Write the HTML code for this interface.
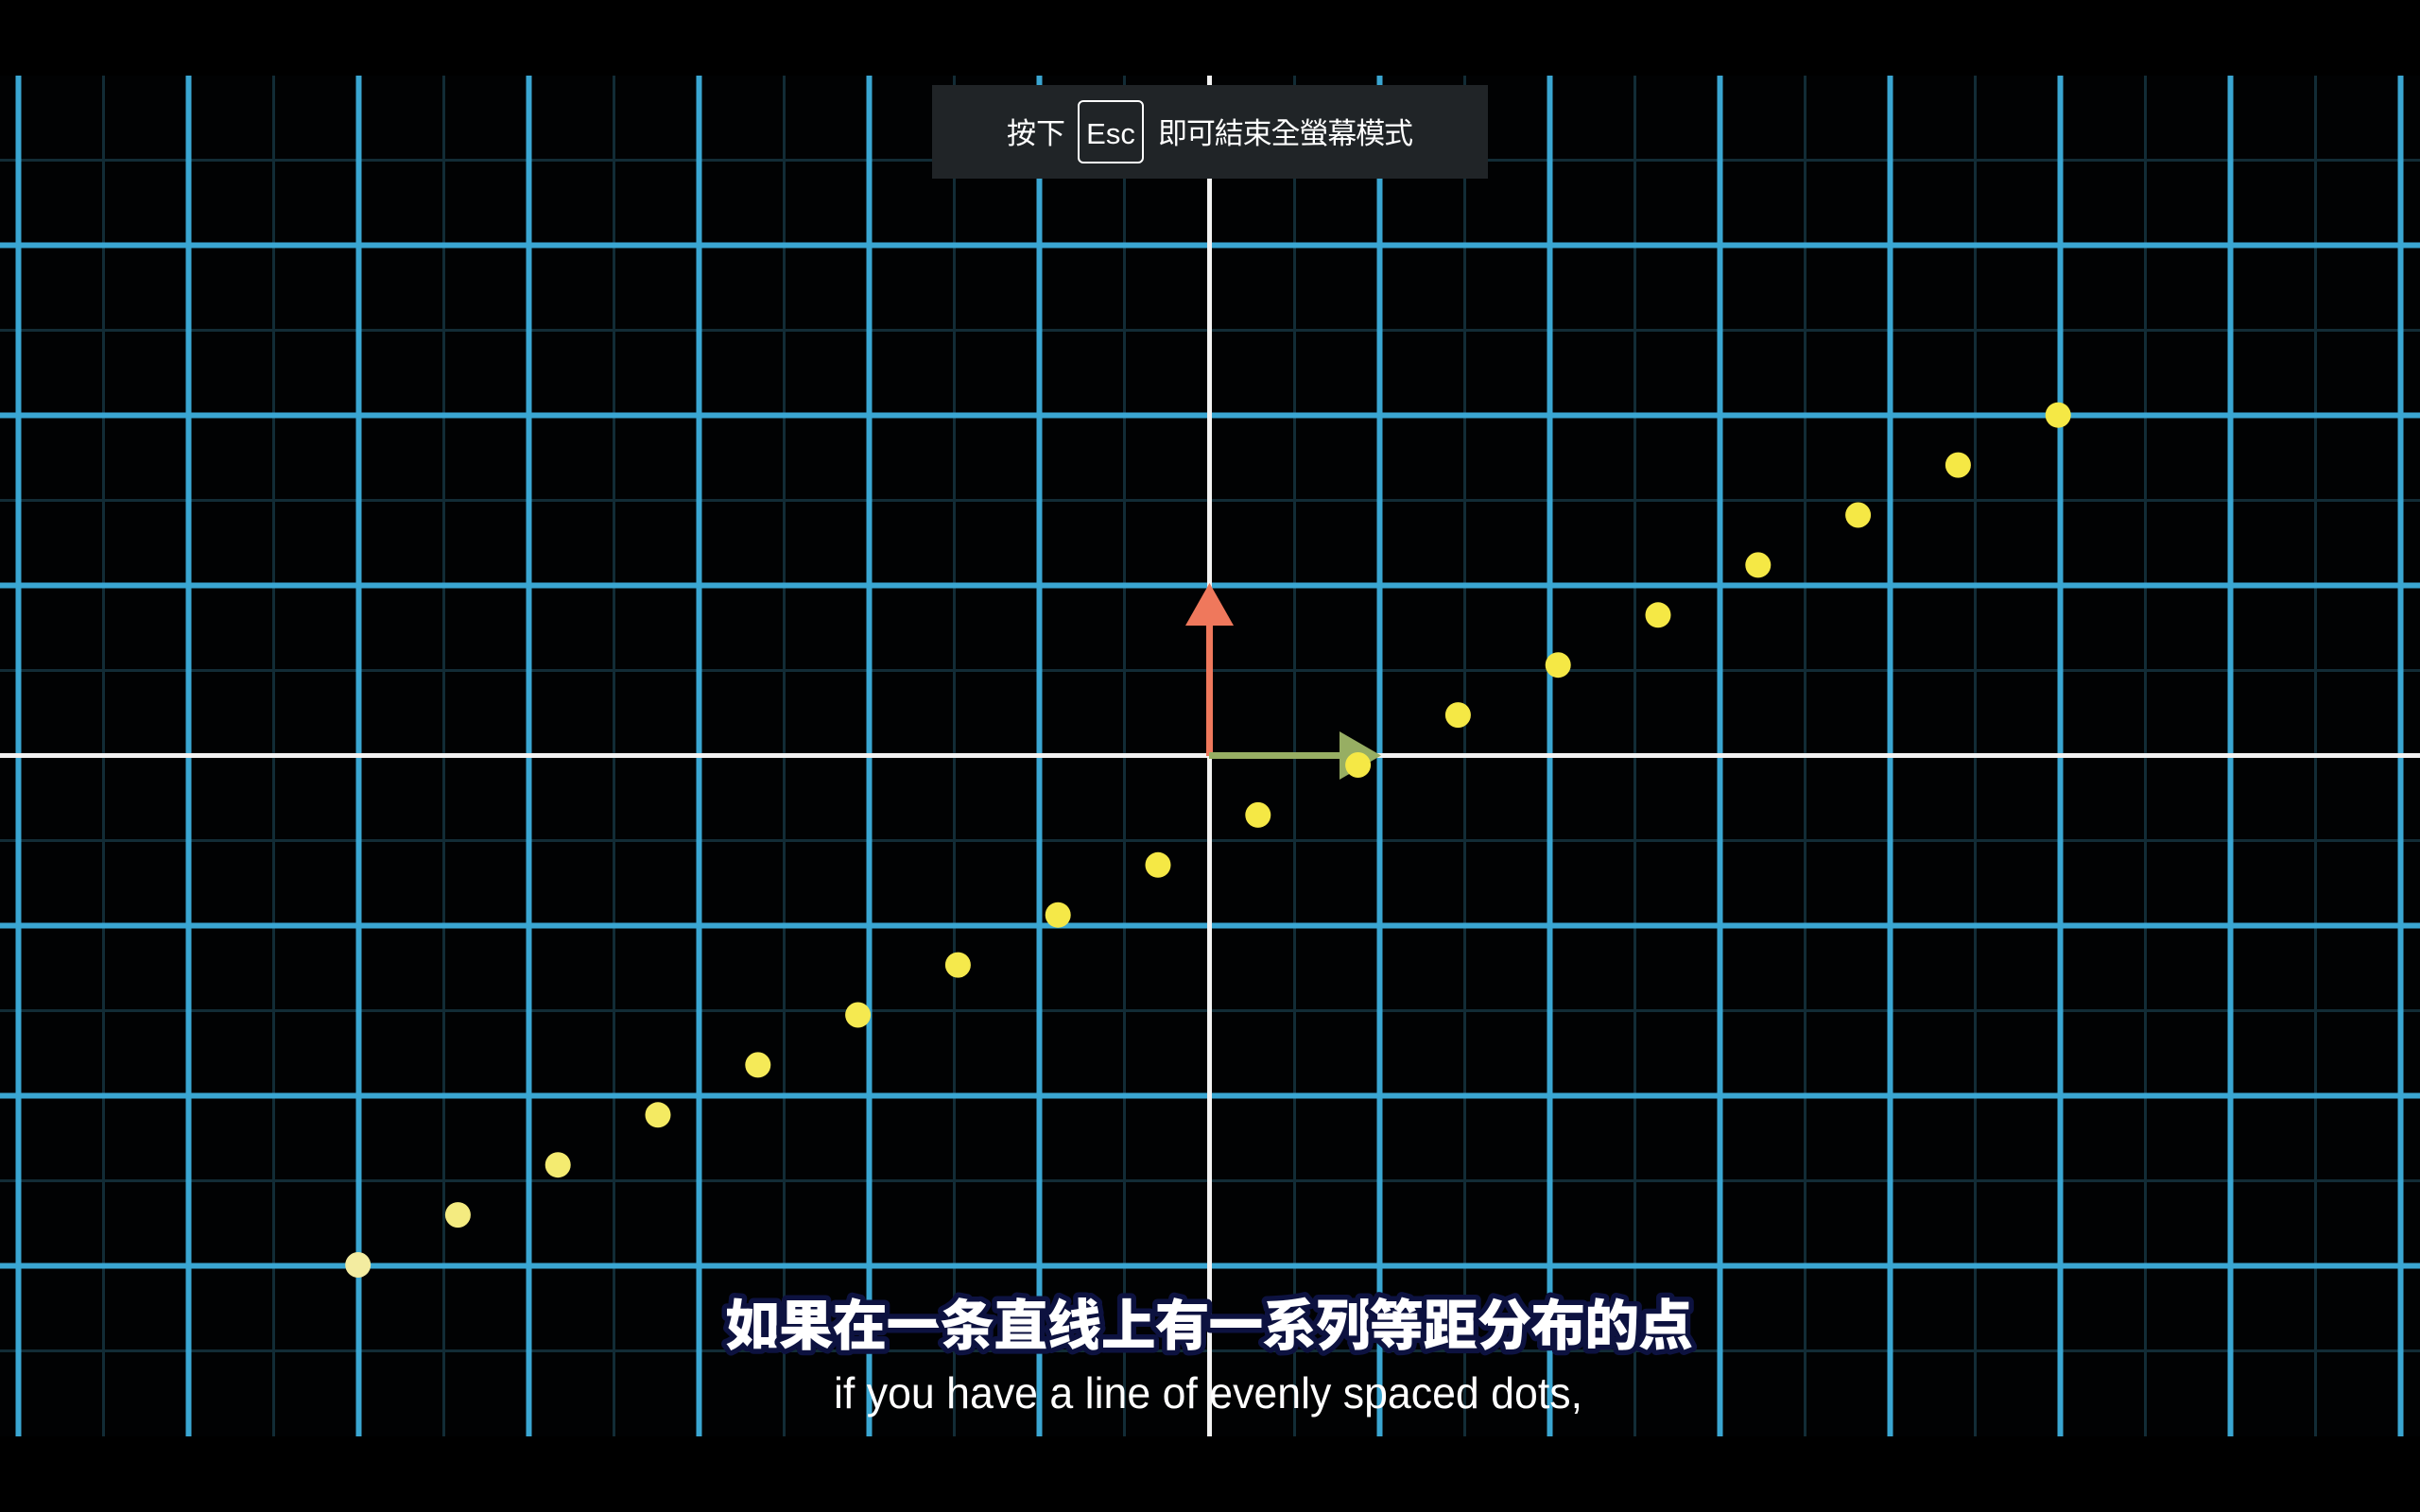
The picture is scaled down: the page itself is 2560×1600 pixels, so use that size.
<!DOCTYPE html>
<html><head><meta charset="utf-8"><style>
html,body{margin:0;padding:0;background:#000;width:2560px;height:1600px;overflow:hidden}
svg{display:block}
</style></head><body>
<svg width="2560" height="1600" viewBox="0 0 2560 1600" xmlns="http://www.w3.org/2000/svg">
<rect width="2560" height="1600" fill="#000"/>
<rect x="0" y="80" width="2560" height="1440" fill="#010203"/>
<g stroke="#122c36" stroke-width="3">
<path d="M109.5 80V1520M289.5 80V1520M469.5 80V1520M649.5 80V1520M829.5 80V1520M1009.5 80V1520M1189.5 80V1520M1369.5 80V1520M1549.5 80V1520M1729.5 80V1520M1909.5 80V1520M2089.5 80V1520M2269.5 80V1520M2449.5 80V1520"/>
<path d="M0 169.5H2560M0 349.5H2560M0 529.5H2560M0 709.5H2560M0 889.5H2560M0 1069.5H2560M0 1249.5H2560M0 1429.5H2560"/>
</g>
<g stroke="#3aa6d2" stroke-width="6">
<path d="M19.5 80V1520M199.5 80V1520M379.5 80V1520M559.5 80V1520M739.5 80V1520M919.5 80V1520M1099.5 80V1520M1459.5 80V1520M1639.5 80V1520M1819.5 80V1520M1999.5 80V1520M2179.5 80V1520M2359.5 80V1520M2539.5 80V1520"/>
<path d="M0 259.5H2560M0 439.5H2560M0 619.5H2560M0 979.5H2560M0 1159.5H2560M0 1339.5H2560"/>
</g>
<g stroke="#f2f2f2" stroke-width="5">
<path d="M1279.5 80V1520M0 799.5H2560"/>
</g>
<rect x="1276" y="655" width="7" height="145" fill="#ef785c"/>
<polygon points="1279.5,617 1254,662 1305,662" fill="#ef785c"/>
<rect x="1279" y="796" width="140" height="7" fill="#97ae63"/>
<polygon points="1461,799.5 1417,774 1417,825" fill="#97ae63"/>
<g>
<circle cx="378.7" cy="1338.5" r="13.5" fill="#f3eca0"/>
<circle cx="484.4" cy="1285.6" r="13.5" fill="#f4eb80"/>
<circle cx="590.2" cy="1232.7" r="13.5" fill="#f4eb70"/>
<circle cx="696" cy="1179.8" r="13.5" fill="#f4ea62"/>
<circle cx="801.8" cy="1126.9" r="13.5" fill="#f5ea58"/>
<circle cx="907.6" cy="1074" r="13.5" fill="#f5e950"/>
<circle cx="1013.4" cy="1021.1" r="13.5" fill="#f5e94c"/>
<circle cx="1119.2" cy="968.2" r="13.5" fill="#f5e848"/>
<circle cx="1225" cy="915.3" r="13.5" fill="#f5e845"/>
<circle cx="1330.8" cy="862.4" r="13.5" fill="#f5e845"/>
<circle cx="1436.6" cy="809.5" r="13.5" fill="#f5e845"/>
<circle cx="1542.4" cy="756.6" r="13.5" fill="#f5e845"/>
<circle cx="1648.2" cy="703.7" r="13.5" fill="#f5e845"/>
<circle cx="1754" cy="650.8" r="13.5" fill="#f5e845"/>
<circle cx="1859.8" cy="597.9" r="13.5" fill="#f5e845"/>
<circle cx="1965.6" cy="545" r="13.5" fill="#f5e845"/>
<circle cx="2071.4" cy="492.1" r="13.5" fill="#f5e845"/>
<circle cx="2177.2" cy="439.2" r="13.5" fill="#f5e845"/>
</g>
<rect x="986" y="90" width="588" height="99" fill="#202427"/>
<text x="1065" y="152" font-family="Liberation Sans, Noto Sans CJK TC, sans-serif" font-size="31" fill="#fff">按下</text>
<rect x="1141" y="107" width="68" height="65" rx="5" fill="none" stroke="#fff" stroke-width="2"/>
<text x="1175" y="152" text-anchor="middle" font-family="Liberation Sans, sans-serif" font-size="31" fill="#fff">Esc</text>
<text x="1225" y="152" font-family="Liberation Sans, Noto Sans CJK TC, sans-serif" font-size="31" fill="#fff" textLength="270">即可結束全螢幕模式</text>
<text x="1279" y="1423" text-anchor="middle" font-family="Liberation Sans, Noto Sans CJK SC, sans-serif" font-weight="900" font-size="58" fill="#fff" stroke="#0d1240" stroke-width="11" paint-order="stroke" stroke-linejoin="round" textLength="1024">如果在一条直线上有一系列等距分布的点</text>
<text x="1278" y="1490" text-anchor="middle" font-family="Liberation Sans, sans-serif" font-size="46" fill="#fff" textLength="792" lengthAdjust="spacingAndGlyphs">if you have a line of evenly spaced dots,</text>
</svg>
</body></html>
